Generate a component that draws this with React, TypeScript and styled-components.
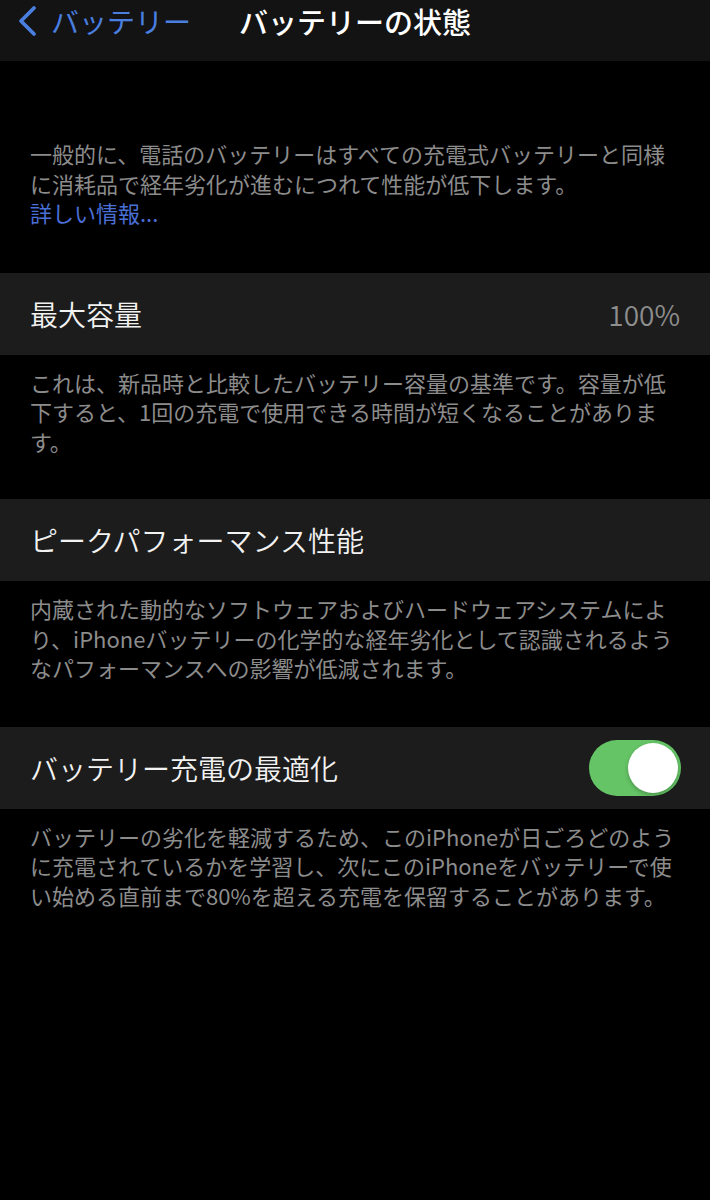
import React, { useState } from 'react';
import styled, { createGlobalStyle } from 'styled-components';

const GlobalStyle = createGlobalStyle`
  html, body {
    margin: 0;
    padding: 0;
    background: #000;
  }
  body {
    font-family: "Noto Sans CJK JP", "Noto Sans", sans-serif;
    -webkit-font-smoothing: antialiased;
  }
`;

const Page = styled.div`
  width: 710px;
  min-height: 1200px;
  background: #000;
  color: #fff;
`;

const NavBar = styled.div`
  height: 61px;
  background: #131313;
  display: grid;
  grid-template-columns: 1fr auto 1fr;
  align-items: start;
  box-sizing: border-box;
  padding-top: 3px;
`;

const BackButton = styled.div`
  display: flex;
  align-items: center;
  gap: 12px;
  padding-left: 15px;
  color: #4a7fe0;
  font-size: 28px;
  line-height: 36px;
`;

const NavTitle = styled.div`
  font-size: 29px;
  line-height: 36px;
  font-weight: 500;
  color: #fff;
`;

const Footer = styled.p<{ $top: number; $bottom: number }>`
  margin: 0;
  padding: ${(p) => p.$top}px 30px ${(p) => p.$bottom}px;
  font-size: 22px;
  line-height: 29.5px;
  color: #8c8c8c;
  white-space: nowrap;
`;

const Link = styled.span`
  color: #4a6fd6;
`;

const Row = styled.div`
  height: 82px;
  background: #1c1c1c;
  display: flex;
  align-items: center;
  justify-content: space-between;
  padding: 0 30px;
  box-sizing: border-box;
`;

const RowTitle = styled.span`
  font-size: 28px;
  font-weight: 350;
  color: #f2f2f2;
`;

const RowValue = styled.span`
  font-size: 28px;
  font-weight: 350;
  color: #8e8e8e;
`;

const Toggle = styled.button<{ $on: boolean }>`
  width: 92px;
  height: 56px;
  border: none;
  padding: 3px;
  border-radius: 28px;
  background: ${(p) => (p.$on ? '#65c466' : '#39393d')};
  display: flex;
  justify-content: ${(p) => (p.$on ? 'flex-end' : 'flex-start')};
  cursor: pointer;
  margin-right: -1px;
`;

const Knob = styled.span`
  width: 50px;
  height: 50px;
  border-radius: 50%;
  background: #fff;
  box-shadow: 0 2px 4px rgba(0, 0, 0, 0.25);
`;

const Chevron = () => (
  <svg width="24" height="32" viewBox="0 0 24 32" fill="none">
    <path d="M19 3 L6 16 L19 29" stroke="#4a7fe0" strokeWidth="3.8" strokeLinecap="round" strokeLinejoin="round" />
  </svg>
);

const App: React.FC = () => {
  const [optimized, setOptimized] = useState(true);

  return (
    <Page>
      <GlobalStyle />
      <NavBar>
        <BackButton>
          <Chevron />
          <span>バッテリー</span>
        </BackButton>
        <NavTitle>バッテリーの状態</NavTitle>
        <div />
      </NavBar>

      <Footer $top={78} $bottom={45}>
        一般的に、電話のバッテリーはすべての充電式バッテリーと同様
        <br />
        に消耗品で経年劣化が進むにつれて性能が低下します。
        <br />
        <Link>詳しい情報...</Link>
      </Footer>

      <Row>
        <RowTitle>最大容量</RowTitle>
        <RowValue>100%</RowValue>
      </Row>
      <Footer $top={13} $bottom={43}>
        これは、新品時と比較したバッテリー容量の基準です。容量が低
        <br />
        下すると、1回の充電で使用できる時間が短くなることがありま
        <br />
        す。
      </Footer>

      <Row>
        <RowTitle>ピークパフォーマンス性能</RowTitle>
      </Row>
      <Footer $top={13} $bottom={44}>
        内蔵された動的なソフトウェアおよびハードウェアシステムによ
        <br />
        り、iPhoneバッテリーの化学的な経年劣化として認識されるよう
        <br />
        なパフォーマンスへの影響が低減されます。
      </Footer>

      <Row>
        <RowTitle>バッテリー充電の最適化</RowTitle>
        <Toggle $on={optimized} onClick={() => setOptimized(!optimized)} aria-label="バッテリー充電の最適化">
          <Knob />
        </Toggle>
      </Row>
      <Footer $top={13} $bottom={40}>
        バッテリーの劣化を軽減するため、このiPhoneが日ごろどのよう
        <br />
        に充電されているかを学習し、次にこのiPhoneをバッテリーで使
        <br />
        い始める直前まで80%を超える充電を保留することがあります。
      </Footer>
    </Page>
  );
};

export default App;
